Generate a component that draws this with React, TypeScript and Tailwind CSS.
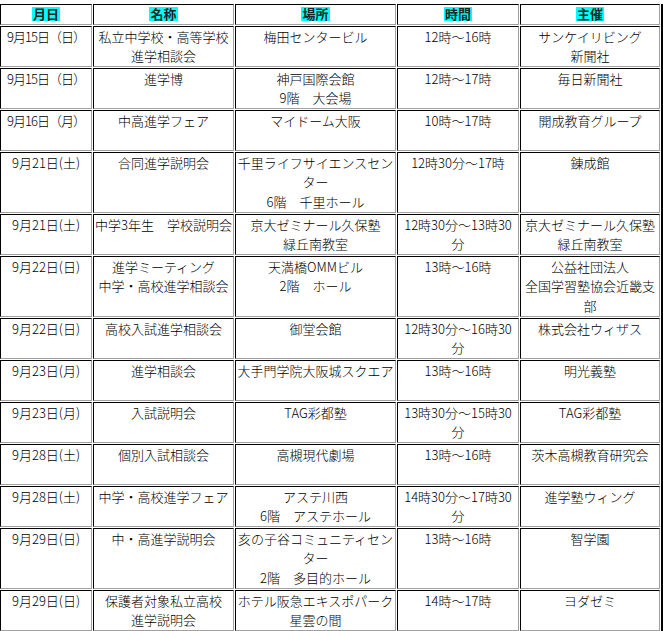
import React from "react";

type Row = {
  date: string;
  wide?: boolean;
  name: string[];
  place: string[];
  time: string[];
  host: string[];
  tall?: boolean;
};

const rows: Row[] = [
  { date: "9月15日（日）", wide: true, name: ["私立中学校・高等学校", "進学相談会"], place: ["梅田センタービル"], time: ["12時～16時"], host: ["サンケイリビング", "新聞社"] },
  { date: "9月15日（日）", wide: true, name: ["進学博"], place: ["神戸国際会館", "9階　大会場"], time: ["12時～17時"], host: ["毎日新聞社"] },
  { date: "9月16日（月）", wide: true, name: ["中高進学フェア"], place: ["マイドーム大阪"], time: ["10時～17時"], host: ["開成教育グループ"] },
  { date: "9月21日(土)", name: ["合同進学説明会"], place: ["千里ライフサイエンスセン", "ター", "6階　千里ホール"], time: ["12時30分～17時"], host: ["錬成館"], tall: true },
  { date: "9月21日(土)", name: ["中学3年生　学校説明会"], place: ["京大ゼミナール久保塾", "緑丘南教室"], time: ["12時30分～13時30", "分"], host: ["京大ゼミナール久保塾", "緑丘南教室"] },
  { date: "9月22日(日)", name: ["進学ミーティング", "中学・高校進学相談会"], place: ["天満橋OMMビル", "2階　ホール"], time: ["13時～16時"], host: ["公益社団法人", "全国学習塾協会近畿支", "部"], tall: true },
  { date: "9月22日(日)", name: ["高校入試進学相談会"], place: ["御堂会館"], time: ["12時30分～16時30", "分"], host: ["株式会社ウィザス"] },
  { date: "9月23日(月)", name: ["進学相談会"], place: ["大手門学院大阪城スクエア"], time: ["13時～16時"], host: ["明光義塾"] },
  { date: "9月23日(月)", name: ["入試説明会"], place: ["TAG彩都塾"], time: ["13時30分～15時30", "分"], host: ["TAG彩都塾"] },
  { date: "9月28日(土)", name: ["個別入試相談会"], place: ["高槻現代劇場"], time: ["13時～16時"], host: ["茨木高槻教育研究会"] },
  { date: "9月28日(土)", name: ["中学・高校進学フェア"], place: ["アステ川西", "6階　アステホール"], time: ["14時30分～17時30", "分"], host: ["進学塾ウィング"] },
  { date: "9月29日(日)", name: ["中・高進学説明会"], place: ["亥の子谷コミュニティセン", "ター", "2階　多目的ホール"], time: ["13時～16時"], host: ["智学園"], tall: true },
  { date: "9月29日(日)", name: ["保護者対象私立高校", "進学説明会"], place: ["ホテル阪急エキスポパーク", "星雲の間"], time: ["14時～17時"], host: ["ヨダゼミ"] },
];

const headers = ["月日", "名称", "場所", "時間", "主催"];

const cellBase =
  "border border-t-black border-l-black border-r-[#a0a0a0] border-b-[#a0a0a0] bg-white text-center whitespace-nowrap";

function Lines({ lines, tight }: { lines: string[]; tight?: boolean }) {
  return (
    <div className={tight ? "tracking-[-1px]" : ""}>
      {lines.map((l, i) => (
        <div key={i}>{l}</div>
      ))}
    </div>
  );
}

export default function App() {
  return (
    <div className="w-[663px] h-[631px] bg-white font-['Noto_Sans_CJK_JP','Noto_Sans_CJK_SC',sans-serif] font-light text-black">
      <div className="inline-block border-r-2 border-b-2 border-black pr-px pb-[2px]">
        <div className="grid grid-cols-[92px_141px_161px_122px_140px] gap-px">
          {headers.map((h) => (
            <div key={h} className={`${cellBase} h-[21px] flex items-center justify-center`}>
              <span className="inline-block h-[14px] leading-[14px] bg-[#00ffff] text-[13px] font-bold text-[#222] px-px">
                {h}
              </span>
            </div>
          ))}
          {rows.map((r, i) => {
            const h = r.tall ? "h-[61px]" : "h-[41px]";
            const cls = `${cellBase} ${h} text-[13px] leading-[19.5px]`;
            return (
              <React.Fragment key={i}>
                <div className={cls}>
                  <Lines lines={[r.date]} tight={r.wide} />
                </div>
                <div className={cls}>
                  <Lines lines={r.name} />
                </div>
                <div className={cls}>
                  <Lines lines={r.place} />
                </div>
                <div className={cls}>
                  <Lines lines={r.time} />
                </div>
                <div className={cls}>
                  <Lines lines={r.host} />
                </div>
              </React.Fragment>
            );
          })}
        </div>
      </div>
    </div>
  );
}
